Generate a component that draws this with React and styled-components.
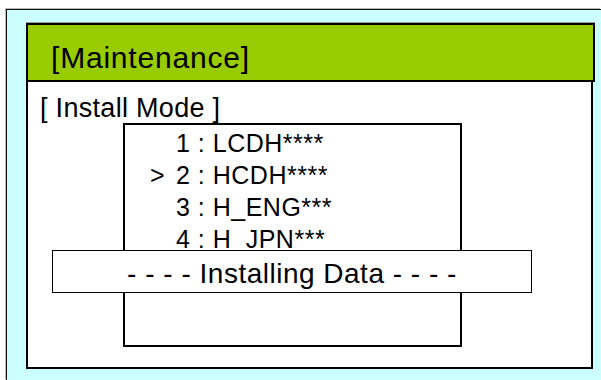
import React from "react";
import styled, { createGlobalStyle } from "styled-components";

const GlobalStyle = createGlobalStyle`
  html, body {
    margin: 0;
    padding: 0;
    background: #ffffff;
    overflow: hidden;
  }
  body {
    font-family: "Liberation Sans", Arial, sans-serif;
    color: #000;
  }
`;

const Frame = styled.div`
  box-sizing: border-box;
  margin: 9px 0 0 6px;
  width: 595px;
  height: 371px;
  background: #ccffff;
  border-top: 1px solid #111;
  border-left: 1px solid #111;
  box-shadow: -1px -1px 0 #b8b8b8;
  padding: 13px 0 0 19px;
`;

const Panel = styled.div`
  width: 567px;
  display: flex;
  flex-direction: column;
`;

const Header = styled.div`
  box-sizing: border-box;
  height: 59px;
  margin-right: -2px;
  background: #99cc00;
  border: 2px solid #000;
  padding: 18px 0 0 23px;
  font-size: 30px;
  line-height: 30px;
  letter-spacing: 0.8px;
  box-shadow: 0 -1px 0 #9a9a9a;
`;

const Body = styled.div`
  position: relative;
  box-sizing: border-box;
  height: 287px;
  background: #fff;
  border: 2px solid #000;
  border-top: none;
  padding: 13px 0 0 12px;
`;

const ModeTitle = styled.div`
  font-size: 27px;
  line-height: 27px;
  letter-spacing: 0.3px;
`;

const ListBox = styled.div`
  box-sizing: border-box;
  width: 339px;
  height: 224px;
  margin: 1px 0 0 83px;
  border: 2px solid #000;
  padding: 2px 0 0 25px;
  display: flex;
  flex-direction: column;
`;

const Row = styled.div`
  display: flex;
  font-size: 25px;
  line-height: 32px;
  letter-spacing: 0.5px;
  white-space: pre;
`;

const Marker = styled.span`
  width: 26px;
  flex: none;
`;

const Overlay = styled.div`
  position: absolute;
  left: 24px;
  top: 168px;
  box-sizing: border-box;
  width: 480px;
  height: 43px;
  background: #fff;
  border: 1.5px solid #000;
  padding-top: 5px;
  text-align: center;
  font-size: 28px;
  line-height: 36px;
  letter-spacing: 0.5px;
  white-space: pre;
`;

const items = [
  { label: "1 : LCDH****" },
  { label: "2 : HCDH****", selected: true },
  { label: "3 : H_ENG***" },
  { label: "4 : H_JPN***" },
];

export default function App() {
  return (
    <>
      <GlobalStyle />
      <Frame>
        <Panel>
          <Header>[Maintenance]</Header>
          <Body>
            <ModeTitle>[ Install Mode ]</ModeTitle>
            <ListBox>
              {items.map((item) => (
                <Row key={item.label}>
                  <Marker>{item.selected ? ">" : ""}</Marker>
                  {item.label}
                </Row>
              ))}
            </ListBox>
            <Overlay>- - - - Installing Data - - - -</Overlay>
          </Body>
        </Panel>
      </Frame>
    </>
  );
}
